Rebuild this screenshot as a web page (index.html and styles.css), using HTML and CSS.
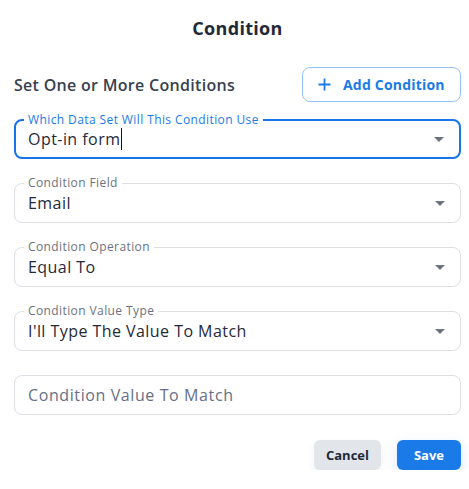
FILE: index.html
```html
<!DOCTYPE html>
<html>
<head>
<meta charset="utf-8">
<link rel="stylesheet" href="styles.css">
</head>
<body>
<div class="dialog">
  <h1 class="title">Condition</h1>
  <div class="head-row">
    <div class="subtitle">Set One or More Conditions</div>
    <button class="btn-add">
      <svg class="plus" width="13" height="13" viewBox="0 0 13 13"><path d="M6.5 0.5v12M0.5 6.5h12" stroke="#1a7be8" stroke-width="1.8" fill="none"/></svg>
      <span>Add Condition</span>
    </button>
  </div>
  <div class="fields">
    <div class="field focused">
      <span class="label">Which Data Set Will This Condition Use</span>
      <span class="value">Opt-in form<span class="caret"></span></span>
      <span class="arrow"></span>
    </div>
    <div class="field">
      <span class="label">Condition Field</span>
      <span class="value">Email</span>
      <span class="arrow"></span>
    </div>
    <div class="field">
      <span class="label">Condition Operation</span>
      <span class="value">Equal To</span>
      <span class="arrow"></span>
    </div>
    <div class="field">
      <span class="label">Condition Value Type</span>
      <span class="value">I'll Type The Value To Match</span>
      <span class="arrow"></span>
    </div>
    <div class="field">
      <span class="value placeholder">Condition Value To Match</span>
    </div>
  </div>
  <div class="actions">
    <button class="btn-cancel">Cancel</button>
    <button class="btn-save">Save</button>
  </div>
</div>
</body>
</html>
```

FILE: styles.css
```css
* { box-sizing: border-box; }
html, body { margin: 0; padding: 0; background: #ffffff; }
body { font-family: "Open Sans", "Noto Sans", sans-serif; color: #1f2937; }

.dialog {
  width: 469px;
  padding: 16px 8px 0 14px;
}

.title {
  margin: 0;
  text-align: center;
  font-size: 18px;
  line-height: 24px;
  font-weight: 700;
  color: #1f2937;
  letter-spacing: 0.3px;
}

.head-row {
  margin-top: 27px;
  display: flex;
  align-items: center;
  justify-content: space-between;
  height: 35px;
}

.subtitle {
  font-size: 16px;
  font-weight: 600;
  color: #374151;
  letter-spacing: 0.3px;
}

.btn-add {
  width: 159px;
  height: 35px;
  border: 1px solid #93c1f4;
  border-radius: 8px;
  background: #fff;
  display: flex;
  align-items: center;
  padding: 0 0 0 15px;
  font-family: inherit;
  font-size: 14px;
  font-weight: 700;
  color: #1a7be8;
  letter-spacing: 0.2px;
  cursor: pointer;
}
.btn-add .plus { margin-right: 12px; flex: none; }

.fields {
  margin-top: 17px;
  display: flex;
  flex-direction: column;
  gap: 24px;
}

.field {
  position: relative;
  height: 40px;
  border: 1px solid #dcdfe4;
  border-radius: 8px;
  display: flex;
  align-items: center;
  padding: 0 13px;
}
.field.focused {
  border: 2px solid #1a73e8;
  padding: 0 12px;
}

.label {
  position: absolute;
  top: -8px;
  left: 9px;
  padding: 0 4px;
  background: #fff;
  font-size: 12px;
  line-height: 14px;
  color: #6b7280;
  letter-spacing: 0.4px;
}
.field.focused .label { left: 8px; color: #1a7be8; }

.value {
  font-size: 16px;
  color: #1f2937;
  letter-spacing: 0.45px;
  display: flex;
  align-items: center;
}
.value.placeholder { color: #667085; letter-spacing: 0.6px; }

.caret {
  display: inline-block;
  width: 1px;
  height: 22px;
  background: #111;
  margin-left: 1px;
}

.arrow {
  position: absolute;
  right: 15px;
  top: 50%;
  margin-top: -2px;
  width: 0;
  height: 0;
  border-left: 5px solid transparent;
  border-right: 5px solid transparent;
  border-top: 5px solid #6b7280;
}

.actions {
  margin-top: 25px;
  display: flex;
  justify-content: flex-end;
  gap: 16px;
}

.btn-cancel, .btn-save {
  height: 30px;
  border: none;
  border-radius: 6px;
  font-family: inherit;
  font-size: 13px;
  font-weight: 700;
  cursor: pointer;
}
.btn-cancel {
  width: 67px;
  background: #e2e5ea;
  color: #1f2937;
  box-shadow: 0 4px 10px rgba(0,0,0,0.06);
}
.btn-save {
  width: 64px;
  background: #1a7be8;
  color: #fff;
  box-shadow: 0 4px 12px rgba(26,123,232,0.18);
}
```
